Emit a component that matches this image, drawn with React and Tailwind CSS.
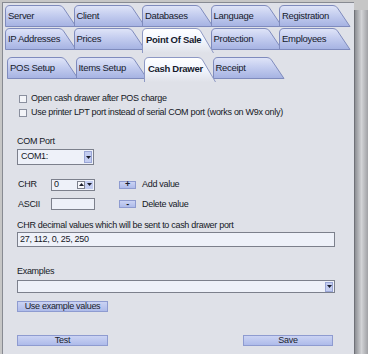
import React from 'react'

const Tab = ({ label, selected, first, id }) => {
  return (
    <div className={`relative h-[22px] w-[72px] shrink-0 ${first ? '' : '-ml-[3.5px]'} ${selected ? 'z-10' : ''}`}>
      <svg className="absolute left-0 top-0" width="72" height={selected ? 25 : 22} viewBox={selected ? '0 0 72 25' : '0 0 72 22'}>
        <defs>
          <linearGradient id={`g-${id}`} x1="0" y1="0" x2="0" y2="1">
            <stop offset="0" stopColor={selected ? '#ffffff' : '#e0e5f8'} />
            <stop offset="0.45" stopColor={selected ? '#f3f7ff' : '#c4cdef'} />
            <stop offset="1" stopColor={selected ? '#dfe1e8' : '#a5b2e2'} />
          </linearGradient>
        </defs>
        {selected ? (
          <path d="M0.5 25 V5 Q0.5 0.5 5 0.5 H54 Q57 0.5 58.5 3 L71.5 25" fill={`url(#g-${id})`} stroke="#8d98c4" />
        ) : (
          <path d="M0.5 21.5 V5 Q0.5 0.5 5 0.5 H54 Q57 0.5 58.5 3 L71 21.5 Z" fill={`url(#g-${id})`} stroke="#7f8bbd" />
        )}
      </svg>
      <span className={`relative flex h-full items-center pl-[3px] text-[#161a2c] ${selected ? 'font-bold pl-[4px] pt-[2px]' : ''}`}>
        {label}
      </span>
    </div>
  )
}

const TabRow = ({ tabs, selected, className, prefix }) => (
  <div className={`flex text-[9.5px] ${className}`}>
    {tabs.map((t, i) => (
      <Tab key={t} id={`${prefix}${i}`} label={t} first={i === 0} selected={t === selected} />
    ))}
  </div>
)

const Btn = ({ children, className }) => (
  <div className={`flex items-center justify-center border border-[#8e9bd0] bg-gradient-to-b from-[#cbd3f3] to-[#aebbea] text-[#1a1d2c] ${className}`}>
    {children}
  </div>
)

const Check = ({ label }) => (
  <div className="flex h-[14px] items-center pl-[2px]">
    <div className="h-[8px] w-[8px] border border-[#8a8f9e] bg-[#f3f4f8]"></div>
    <span className="ml-[4px]">{label}</span>
  </div>
)

const Arrow = ({ up }) => (
  <svg width="5" height="3" viewBox="0 0 5 3">
    <path d={up ? 'M0 3 L2.5 0 L5 3 Z' : 'M0 0 L5 0 L2.5 3 Z'} fill="#1a1d2c" />
  </svg>
)

export default function App() {
  return (
    <div className="flex h-[354px] w-[368px] overflow-hidden bg-[#c6c6c6] font-['Liberation_Sans',Arial,sans-serif] text-[9px] tracking-[-0.3px] text-[#15181f]">
      {/* main panel */}
      <div className="ml-[2px] mt-[2px] flex w-[352px] flex-col border-l border-t border-[#878a92] bg-[#dfe1e8]">
        <TabRow prefix="a" className="ml-[2px] mt-[2px]" tabs={['Server', 'Client', 'Databases', 'Language', 'Registration']} />
        <TabRow prefix="b" className="ml-[2px] mt-[1px]" selected="Point Of Sale" tabs={['IP Addresses', 'Prices', 'Point Of Sale', 'Protection', 'Employees']} />
        <TabRow prefix="c" className="ml-[4px] mt-[7px]" selected="Cash Drawer" tabs={['POS Setup', 'Items Setup', 'Cash Drawer', 'Receipt']} />

        <div className="flex flex-col pl-[14px]">
          <div className="mt-[13px]">
            <Check label="Open cash drawer after POS charge" />
            <Check label="Use printer LPT port instead of serial COM port (works on W9x only)" />
          </div>

          <div className="mt-[16px] flex h-[12px] items-center">COM Port</div>
          <div className="mt-[1px] flex h-[16px] w-[77px] items-center border border-[#7c808c] bg-[#eef1f9]">
            <span className="flex-1 pl-[3px]">COM1:</span>
            <div className="mr-[1px] flex h-[12px] w-[8px] items-center justify-center border border-[#9aa6d6] bg-[#c3cdf1]">
              <Arrow />
            </div>
          </div>

          <div className="mt-[13px] flex items-center">
            <span className="w-[34px] pl-[1px]">CHR</span>
            <div className="flex h-[12px] w-[44px] items-center border border-[#7c808c] bg-[#eef1f9]">
              <span className="flex-1 pl-[2px]">0</span>
              <div className="flex h-[8px] w-[8px] items-center justify-center border border-[#7c808c] bg-[#f6f7fb]">
                <Arrow up />
              </div>
              <div className="mr-[1px] flex h-[8px] w-[8px] items-center justify-center bg-[#c3cdf1]">
                <Arrow />
              </div>
            </div>
            <Btn className="ml-[24px] h-[8px] w-[17px] font-bold">+</Btn>
            <span className="ml-[6px]">Add value</span>
          </div>
          <div className="mt-[6px] flex items-center">
            <span className="w-[34px] pl-[1px]">ASCII</span>
            <div className="h-[12px] w-[44px] border border-[#7c808c] bg-[#eef1f9]"></div>
            <Btn className="ml-[24px] h-[8px] w-[17px] font-bold">-</Btn>
            <span className="ml-[6px]">Delete value</span>
          </div>

          <div className="mt-[9px] flex h-[12px] items-center">CHR decimal values which will be sent to cash drawer port</div>
          <div className="flex h-[15px] w-[318px] items-center border border-[#7c808c] bg-[#eef1f9] pl-[2px]">27, 112, 0, 25, 250</div>

          <div className="mt-[19px] flex h-[12px] items-center">Examples</div>
          <div className="mt-[2px] flex h-[13px] w-[318px] items-center justify-end border border-[#7c808c] bg-[#eef1f9]">
            <div className="mr-[1px] flex h-[10px] w-[8px] items-center justify-center border border-[#9aa6d6] bg-[#c3cdf1]">
              <Arrow />
            </div>
          </div>

          <Btn className="mt-[8px] h-[11px] w-[91px]">Use example values</Btn>

          <div className="mt-[23px] flex w-[316px] justify-between">
            <Btn className="h-[11px] w-[91px]">Test</Btn>
            <Btn className="h-[11px] w-[90px]">Save</Btn>
          </div>
        </div>
      </div>
      {/* right edge strip */}
      <div className="mt-[10px] w-[14px] border-l border-[#6f7178] bg-gradient-to-r from-[#8d8f94] via-[#d2d3d6] to-[#a0a1a5]"></div>
    </div>
  )
}
